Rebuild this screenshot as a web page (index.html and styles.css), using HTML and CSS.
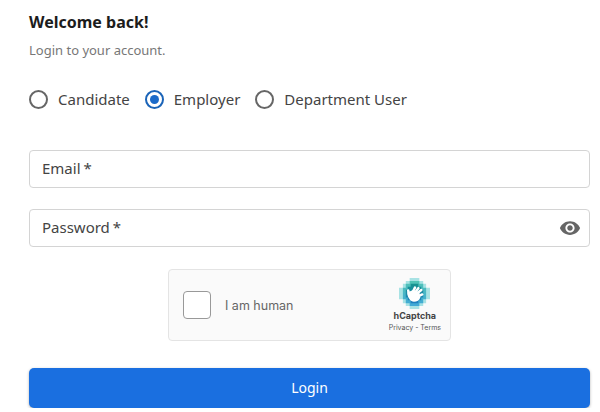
FILE: index.html
```html
<!DOCTYPE html>
<html lang="en">
<head>
  <meta charset="UTF-8" />
  <title>Login</title>
  <link rel="stylesheet" href="styles.css">
</head>
<body>
  <div class="login">
    <h1>Welcome back!</h1>
    <p class="sub">Login to your account.</p>

    <div class="roles">
      <div class="role"><span class="radio"></span>Candidate</div>
      <div class="role"><span class="radio on"></span>Employer</div>
      <div class="role"><span class="radio"></span>Department User</div>
    </div>

    <div class="field">Email<span class="star">*</span></div>
    <div class="field">Password<span class="star">*</span>
      <svg class="eye" width="22" height="22" viewBox="0 0 24 24"><path fill="#666" d="M12 4.500C7 4.500 2.730 7.610 1 12c1.730 4.390 6 7.500 11 7.500s9.270-3.110 11-7.500c-1.730-4.390-6-7.500-11-7.500zM12 17c-2.760 0-5-2.240-5-5s2.240-5 5-5 5 2.240 5 5-2.240 5-5 5zm0-8c-1.660 0-3 1.340-3 3s1.340 3 3 3 3-1.340 3-3-1.340-3-3-3z"/></svg>
    </div>

    <div class="captcha">
      <span class="check"></span>
      <span class="human">I am human</span>
      <div class="brand">
        <svg width="31" height="31" viewBox="0 0 32 32">
          <defs>
            <linearGradient id="logoMid" x1="0" y1="0" x2="0" y2="1">
              <stop offset="0" stop-color="#52c4b4"/>
              <stop offset="1" stop-color="#3fa8d8"/>
            </linearGradient>
            <linearGradient id="logoCore" x1="0" y1="0" x2="0" y2="1">
              <stop offset="0" stop-color="#17938f"/>
              <stop offset="1" stop-color="#1f7fc0"/>
            </linearGradient>
          </defs>
          <path fill="#a8e2e4" d="M11 0h10v3h4v3h3v4h4v12h-4v4h-3v3h-4v3H11v-3H7v-3H4v-4H0V10h4V6h3V3h4z"/>
          <path fill="url(#logoMid)" d="M11 3h10v3h4v4h3v12h-3v4h-4v3H11v-3H7v-4H4V10h3V6h4z"/>
          <path fill="url(#logoCore)" d="M12 6h8v3h3v3h2v8h-2v3h-3v3h-8v-3H9v-3H7v-8h2V9h3z"/>
          <g stroke="#fff" stroke-width="2.600" stroke-linecap="round" fill="none">
            <path d="M10.500 18L9.500 13"/>
            <path d="M14 15L16.500 10"/>
            <path d="M16.500 15L20 10.500"/>
            <path d="M18.500 16L23 12.500"/>
            <path d="M19.500 19L24 17"/>
          </g>
          <path fill="#fff" d="M8.500 15l6-2.500 6.500 2 1 5.500c-1 3-3.500 4.500-6.500 4.500-4 0-6.500-4-7-9.500z"/>
        </svg>
        <span class="brand-name">hCaptcha</span>
        <span class="brand-links">Privacy - Terms</span>
      </div>
    </div>

    <button class="submit">Login</button>
  </div>
</body>
</html>
```

FILE: styles.css
```css
* { box-sizing: border-box; }
body {
  margin: 0;
  background: #fff;
  font-family: "Noto Sans", sans-serif;
  color: #333;
  overflow: hidden;
}
.login {
  padding: 10px 10px 0 29px;
  display: flex;
  flex-direction: column;
}
h1 {
  margin: 0;
  font-size: 16px;
  line-height: 24px;
  font-weight: 700;
  color: #1c1c1c;
}
.sub {
  margin: 7px 0 0;
  font-size: 13px;
  line-height: 18px;
  color: #777;
}
.roles {
  display: flex;
  margin-top: 28px;
  height: 24px;
  align-items: center;
}
.role {
  display: flex;
  align-items: center;
  font-size: 15px;
  color: #444;
  margin-right: 15px;
}
.radio {
  width: 19px;
  height: 19px;
  border: 2px solid #666;
  border-radius: 50%;
  margin-right: 10px;
  padding: 3px;
}
.radio.on {
  border-color: #1b64b8;
}
.radio.on::after {
  content: "";
  display: block;
  width: 9px;
  height: 9px;
  border-radius: 50%;
  background: #1b6ac9;
}
.field {
  display: flex;
  align-items: center;
  height: 38px;
  margin-top: 21px;
  padding: 0 12px 2px;
  border: 1px solid #d4d4d4;
  border-radius: 4px;
  font-size: 15px;
  color: #444;
}
.roles + .field {
  margin-top: 39px;
}
.star {
  margin-left: 3px;
}
.eye {
  margin-left: auto;
  margin-right: -4px;
  margin-bottom: -2px;
}
.captcha {
  display: flex;
  align-items: center;
  align-self: center;
  width: 283px;
  height: 72px;
  margin-top: 22px;
  padding: 0 9px 0 14px;
  background: #fafafa;
  border: 1px solid #e4e4e4;
  border-radius: 4px;
}
.check {
  width: 28px;
  height: 28px;
  background: #fff;
  border: 1px solid #999;
  border-radius: 4px;
}
.human {
  margin-left: 14px;
  font-family: Inter, sans-serif;
  font-size: 12.500px;
  color: #666;
}
.brand {
  margin-left: auto;
  display: flex;
  flex-direction: column;
  align-items: center;
  font-family: Inter, sans-serif;
}
.brand-name {
  font-size: 9px;
  font-weight: 700;
  color: #444;
  margin-top: 1px;
}
.brand-links {
  font-size: 7px;
  color: #555;
  margin-top: 2px;
}
.submit {
  height: 40px;
  margin-top: 27px;
  padding-bottom: 3px;
  background: #1a6fe0;
  color: #fff;
  border: none;
  border-radius: 5px;
  font-family: "Noto Sans", sans-serif;
  font-size: 14px;
  box-shadow: 0 1px 3px rgba(0, 0, 0, 0.3);
}
```
